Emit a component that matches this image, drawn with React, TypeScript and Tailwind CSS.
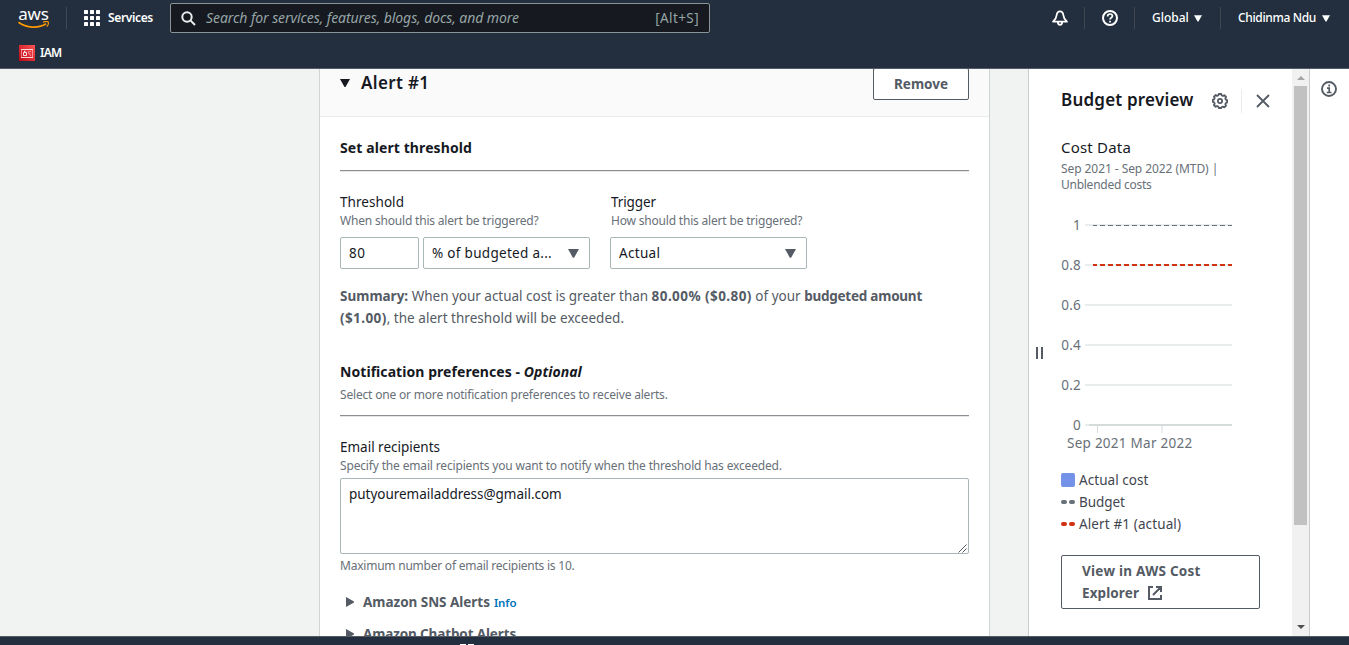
import type { ReactNode } from 'react';

function CaretDown({ className }: { className: string }) {
  return (
    <svg className={className} viewBox="0 0 10 8" fill="currentColor">
      <path d="M0 0h10L5.8 7.4a1 1 0 0 1-1.6 0z" />
    </svg>
  );
}

function CaretRight() {
  return (
    <svg className="h-2.5 w-2 shrink-0" viewBox="0 0 8 10" fill="currentColor">
      <path d="M0 0v10l7.6-4.3a.8.8 0 0 0 0-1.4z" />
    </svg>
  );
}

function Divider({ className = '' }: { className?: string }) {
  return <div className={`h-[22px] w-px bg-[#414750] ${className}`} />;
}

function AwsLogo() {
  return (
    <div className="flex w-[31px] flex-col items-center">
      <span className="h-3 text-[17px] leading-[9px] font-normal tracking-[-0.1px] text-white">aws</span>
      <svg className="h-2 w-[31px]" viewBox="0 0 31 8" fill="none" stroke="#ff9900">
        <path d="M.5 1.2C8.500 7 20.500 7.800 28 2.800" strokeWidth="1.700" />
        <path d="M25 1.100c2-.6 4.600-.7 5.200 0 .5.900-.3 3.200-1.500 4.600" strokeWidth="1.200" />
      </svg>
    </div>
  );
}

function Header() {
  return (
    <header className="h-[69px] shrink-0 border-b border-[#545b64] bg-[#232f3e] text-white">
      <div className="flex h-9 items-center">
        <div className="ml-[18px] flex h-9 items-center pt-px">
          <AwsLogo />
        </div>
        <Divider className="ml-[17px]" />
        <svg className="ml-[17px] size-4" viewBox="0 0 16 16" fill="#fff">
          {[0, 6, 12].map((y) =>
            [0, 6, 12].map((x) => <rect key={`${x}-${y}`} x={x} y={y} width="4" height="4" rx="0.6" />),
          )}
        </svg>
        <span className="ml-2 w-[62px] text-[12px] font-semibold tracking-[-0.36px]">Services</span>
        <div className="flex h-[30px] w-[540px] items-center rounded-[2px] border border-[#879596] bg-[#16191f] px-2.5 text-[#879596]">
          <svg className="size-[15px]" viewBox="0 0 15 15" fill="none" stroke="#eaeded" strokeWidth="2">
            <circle cx="6" cy="6" r="4.700" />
            <path d="M9.400 9.400l4.600 4.600" />
          </svg>
          <span className="ml-2.5 grow -translate-y-px text-[14px] tracking-[-0.073px] whitespace-nowrap text-[#95a5a6] italic">
            Search for services, features, blogs, docs, and more
          </span>
          <span className="text-[13.500px] tracking-[0.4px] text-[#95a5a6]">[Alt+S]</span>
        </div>
        <svg className="ml-[342px] size-4" viewBox="0 0 16 16" fill="none" stroke="#fff" strokeWidth="1.800" strokeLinejoin="round">
          <path d="M8 1.300C5.800 1.300 4.900 2.900 4.700 5 4.500 7.800 3.200 9.600 1.100 11.700h13.800C12.800 9.600 11.500 7.800 11.300 5 11.100 2.900 10.200 1.300 8 1.300z" />
          <path d="M5.900 12c0 1.700.7 2.900 2.100 2.900s2.100-1.200 2.100-2.900" />
        </svg>
        <Divider className="ml-4" />
        <svg className="ml-[17px] size-4" viewBox="0 0 16 16" fill="none" stroke="#fff" strokeWidth="2">
          <circle cx="8" cy="8" r="7" />
          <path d="M5.600 6.400C5.600 4.900 6.600 4 8 4s2.400.9 2.400 2.100c0 1.700-2.400 1.700-2.400 3.500M8 10.700v1.900" strokeWidth="1.700" />
        </svg>
        <Divider className="ml-4" />
        <span className="ml-[17px] w-[42px] text-[12px] font-medium">Global</span>
        <CaretDown className="h-[7px] w-2" />
        <Divider className="ml-[18px]" />
        <span className="ml-[17px] w-[84px] text-[12px] font-medium tracking-[-0.35px] whitespace-nowrap">Chidinma Ndu</span>
        <CaretDown className="h-[7px] w-2" />
      </div>
      <div className="flex h-[33px] items-center pl-[19px]">
        <svg className="size-4" viewBox="0 0 16 16" fill="none" stroke="#fff">
          <defs>
            <linearGradient id="iam" x1="0" y1="1" x2="1" y2="0">
              <stop stopColor="#bd0816" />
              <stop offset="1" stopColor="#ff5252" />
            </linearGradient>
          </defs>
          <rect width="16" height="16" fill="url(#iam)" stroke="none" />
          <path d="M2.500 5v7M13.500 5v7" strokeOpacity=".45" />
          <path d="M2 4.500h12M2 12.500h12" strokeOpacity=".8" />
          <path d="M4.500 7.500h3v3h-3zM5.500 7v-1h1" strokeOpacity=".85" />
          <path d="M9 6.500h3M9.500 7v1.500h1.500v2h1" strokeOpacity=".4" />
        </svg>
        <span className="ml-[5px] text-[12px] font-semibold tracking-[-0.8px]">IAM</span>
      </div>
    </header>
  );
}

function SectionRule({ className }: { className: string }) {
  return <div className={`h-0.5 border-t border-b border-t-[#8b8e92] border-b-[#e6e6e6] ${className}`} />;
}

function Hint({ className = '', children }: { className?: string; children: ReactNode }) {
  return <p className={`text-[12px] leading-4 whitespace-nowrap text-[#687078] ${className}`}>{children}</p>;
}

function AlertCard() {
  return (
    <section className="w-[671px] shrink-0 overflow-hidden border-x border-[#d0d4d5] bg-white">
      <div className="flex h-12 items-start justify-between border-b border-[#eaeded] bg-[#fafafa] pr-5 pl-5">
        <div className="flex h-7 items-center">
          <CaretDown className="h-2 w-2.5" />
          <h2 className="ml-[11px] text-[17px] leading-7 font-semibold tracking-[0.35px]">Alert #1</h2>
        </div>
        <button className="-mt-px h-8 w-24 rounded-[2px] border border-[#545b64] bg-white text-[13.500px] leading-[30px] font-bold text-[#545b64]">
          Remove
        </button>
      </div>

      <div className="px-5 pt-5">
        <h3 className="text-[14px] leading-[22px] font-bold tracking-[0.1px]">Set alert threshold</h3>
        <SectionRule className="mt-[11px]" />

        <div className="mt-[19px] flex gap-5">
          <div className="w-[250px]">
            <p className="text-[13.500px] leading-[22px] tracking-[0.05px]">Threshold</p>
            <Hint className="tracking-[-0.190px]">When should this alert be triggered?</Hint>
            <div className="mt-2 flex gap-1">
              <div className="h-8 w-[79px] rounded-[2px] border border-[#aab7b8] pl-2 text-[13.500px] leading-[30px] tracking-[0.5px]">80</div>
              <div className="flex h-8 w-[167px] items-center justify-between rounded-[2px] border border-[#aab7b8] pr-2.5 pl-2 text-[13.500px] tracking-[0.300px]">
                <span>% of budgeted a...</span>
                <CaretDown className="h-[9px] w-[11px] text-[#545b64]" />
              </div>
            </div>
          </div>
          <div className="w-[197px]">
            <p className="pl-px text-[13.500px] leading-[22px] tracking-[-0.1px]">Trigger</p>
            <Hint className="pl-px tracking-[-0.190px]">How should this alert be triggered?</Hint>
            <div className="mt-2 flex h-8 items-center justify-between rounded-[2px] border border-[#aab7b8] pr-2.5 pl-2 text-[13.500px] tracking-[0.300px]">
              <span>Actual</span>
              <CaretDown className="h-[9px] w-[11px] text-[#545b64]" />
            </div>
          </div>
        </div>

        <p className="mt-4 text-[13.500px] leading-[22px] whitespace-nowrap text-[#545b64]">
          <b>Summary:</b> <span className="tracking-[-0.02px]">When your actual cost is greater than </span>
          <b className="tracking-[0.430px]">80.00% ($0.80)</b> of your <b className="tracking-[-0.240px]">budgeted amount</b>
          <br />
          <b className="tracking-[0.4px]">($1.00)</b>
          <span className="tracking-[0.03px]">, the alert threshold will be exceeded.</span>
        </p>

        <h3 className="mt-8 text-[14px] leading-[22px] font-bold tracking-[0.06px]">
          Notification preferences - <i>Optional</i>
        </h3>
        <Hint className="mt-1 tracking-[-0.185px]">Select one or more notification preferences to receive alerts.</Hint>
        <SectionRule className="mt-3" />

        <p className="mt-[19px] text-[13.500px] leading-[22px] tracking-[-0.01px]">Email recipients</p>
        <Hint className="tracking-[-0.160px]">
          Specify the email recipients you want to notify when the threshold has exceeded.
        </Hint>
        <div className="mt-1 flex h-[76px] justify-between rounded-[2px] border border-[#aab7b8] pl-2">
          <span className="pt-1 text-[13.500px] leading-[22px] tracking-[-0.03px]">putyouremailaddress@gmail.com</span>
          <svg className="size-2.5 self-end" viewBox="0 0 10 10" stroke="#545b64" strokeWidth="1">
            <path d="M.5 9.500l8-8M4.500 9.500l4-4" />
          </svg>
        </div>
        <Hint className="mt-1 tracking-[-0.230px]">Maximum number of email recipients is 10.</Hint>

        <div className="mt-[17px] flex h-[22px] items-center pl-1.5 text-[#545b64]">
          <CaretRight />
          <span className="ml-[9px] text-[13.500px] font-bold tracking-[-0.03px] whitespace-nowrap">Amazon SNS Alerts</span>
          <span className="ml-1 translate-y-px text-[11.500px] font-semibold tracking-[-0.1px] text-[#0073bb]">Info</span>
        </div>
        <div className="mt-2.5 flex h-[22px] items-center pl-1.5 text-[#545b64]">
          <CaretRight />
          <span className="ml-[9px] text-[13.500px] font-bold tracking-[-0.130px] whitespace-nowrap">Amazon Chatbot Alerts</span>
        </div>
      </div>
    </section>
  );
}

const ticks = ['1', '0.8', '0.6', '0.4', '0.2', '0'];

function CostChart() {
  return (
    <svg className="mt-[17px] h-[250px] w-[199px] overflow-visible" viewBox="0 0 199 250">
      {ticks.map((t, i) => (
        <g key={t}>
          <text x="20" y={20 + i * 40} textAnchor="end" className="fill-[#687078] text-[13.500px] tracking-[0.2px]">
            {t}
          </text>
          <path d={`M24 ${15 + i * 40}h147`} stroke="#eaeded" strokeWidth="2" />
        </g>
      ))}
      <path d="M28 215h143" stroke="#d5dbdb" strokeWidth="2" />
      <path d="M36.500 216v7" stroke="#d5dbdb" />
      <path d="M101 216v7" stroke="#eaeded" strokeWidth="2" />
      <path d="M32 15.500h139" stroke="#687078" strokeWidth="1" strokeDasharray="5 3" strokeDashoffset="1" />
      <path d="M32 55h139" stroke="#d13212" strokeWidth="2" strokeDasharray="5 3" strokeDashoffset="1" />
      <text x="6" y="238" className="fill-[#687078] text-[13.500px] tracking-[0.260px]">
        Sep 2021 Mar 2022
      </text>
    </svg>
  );
}

function Dashes({ className }: { className: string }) {
  return (
    <span className="flex w-3.5 gap-0.5">
      <i className={`h-1 w-1.5 rounded-[2px] ${className}`} />
      <i className={`h-1 w-1.5 rounded-[2px] ${className}`} />
    </span>
  );
}

function BudgetPreview() {
  return (
    <aside className="flex w-[282px] shrink-0 border-x border-[#c8cccd] bg-white">
      <div className="flex w-8 shrink-0 items-start gap-[3px] pt-[278px] pl-[7px]">
        <i className="h-3 w-0.5 bg-[#545b64]" />
        <i className="h-3 w-0.5 bg-[#545b64]" />
      </div>
      <div className="w-[231px] shrink-0">
        <div className="flex h-16 items-center">
          <h2 className="w-[151px] -translate-y-px text-[17px] font-semibold tracking-[0.200px] whitespace-nowrap">Budget preview</h2>
          <svg className="size-4" viewBox="0 0 16 16" fill="none" stroke="#545b64">
            <path
              d="M6.700 1h2.600l.4 1.500 1.300.5 1.300-.8 1.800 1.800-.8 1.300.5 1.300 1.300.4v2.600l-1.300.4-.5 1.300.8 1.300-1.800 1.800-1.300-.8-1.300.5L9.300 15H6.700l-.4-1.500L5 13l-1.300.8L1.900 12l.8-1.300-.5-1.300L.9 9V6.700l1.300-.4L2.700 5l-.8-1.200L3.700 2l1.300.9 1.300-.5z"
              strokeWidth="1.800"
              strokeLinejoin="round"
            />
            <circle cx="8" cy="8" r="2.100" strokeWidth="1.800" />
          </svg>
          <div className="ml-[13px] h-6 w-px bg-[#eaeded]" />
          <svg className="ml-3.5 size-3.5" viewBox="0 0 14 14" fill="none" stroke="#545b64" strokeWidth="1.800">
            <path d="M1 1l12 12M13 1L1 13" />
          </svg>
        </div>
        <p className="mt-[3px] text-[15px] leading-[22px] tracking-[0.2px]">Cost Data</p>
        <Hint className="mt-[3px] tracking-[-0.070px]">Sep 2021 - Sep 2022 (MTD) |</Hint>
        <Hint className="tracking-[-0.260px]">Unblended costs</Hint>
        <CostChart />
        <ul className="mt-[9px] text-[13.500px] leading-[22px] text-[#3f4650]">
          <li className="flex items-center gap-1">
            <i className="size-3.5 rounded-[2px] bg-[#7493e8]" />
            <span className="tracking-[0.06px]">Actual cost</span>
          </li>
          <li className="flex items-center gap-1">
            <Dashes className="bg-[#687078]" />
            <span className="tracking-[-0.080px]">Budget</span>
          </li>
          <li className="flex items-center gap-1">
            <Dashes className="bg-[#d13212]" />
            <span className="tracking-[0.120px]">Alert #1 (actual)</span>
          </li>
        </ul>
        <button className="mt-5 h-[54px] w-[199px] rounded-[2px] border border-[#545b64] pl-5 text-left text-[13.500px] leading-[22px] font-bold whitespace-nowrap text-[#545b64]">
          <span className="block tracking-[0.260px]">View in AWS Cost</span>
          <span className="flex items-center gap-[9px] tracking-[0.1px]">
            Explorer
            <svg className="size-3.5" viewBox="0 0 14 14" fill="none" stroke="currentColor" strokeWidth="2">
              <path d="M5 1H1v12h12V9M8 1h5v5M13 1L5 9" />
            </svg>
          </span>
        </button>
      </div>
      <div className="flex w-[17px] shrink-0 flex-col items-center bg-[#f1f1f1]">
        <svg className="mt-[7px] h-[4px] w-2" viewBox="0 0 8 4">
          <path d="M4 0l4 4H0z" fill="#a3a3a3" />
        </svg>
        <div className="mt-1.5 h-[439px] w-[13px] bg-[#c1c1c1]" />
        <svg className="mt-auto mb-[7px] h-[4px] w-2" viewBox="0 0 8 4">
          <path d="M0 0h8L4 4z" fill="#505050" />
        </svg>
      </div>
    </aside>
  );
}

export default function App() {
  return (
    <div className="flex h-[645px] w-[1349px] flex-col overflow-hidden bg-[#f1f3f3] font-['Noto_Sans',sans-serif] text-[#16191f]">
      <Header />
      <main className="flex h-[567px] shrink-0 overflow-hidden">
        <div className="w-[319px] shrink-0" />
        <AlertCard />
        <div className="w-[38px] shrink-0" />
        <BudgetPreview />
        <div className="grow bg-white pt-3 pl-[11px]">
          <svg className="size-4" viewBox="0 0 16 16" fill="none" stroke="#545b64" strokeWidth="1.900">
            <circle cx="8" cy="8" r="7" />
            <path d="M8.200 3.500v2M6 7.200h2.200V11M5.700 11.500h4.800" strokeWidth="1.700" />
          </svg>
        </div>
      </main>
      <footer className="flex h-[9px] shrink-0 items-end gap-0.5 border-t border-[#545b64] bg-[#232f3e] pl-[460px]">
        <i className="h-px w-1.5 bg-white" />
        <i className="h-px w-1.5 bg-white" />
      </footer>
    </div>
  );
}
